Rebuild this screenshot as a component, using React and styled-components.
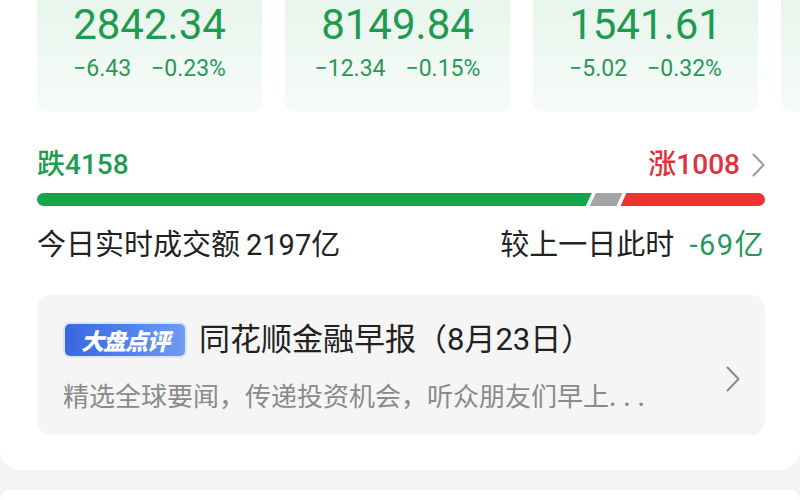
import React from "react";
import styled, { createGlobalStyle } from "styled-components";

const Global = createGlobalStyle`
  html, body { margin: 0; padding: 0; background: #f3f3f3; }
  body {
    font-family: Roboto, "Noto Sans CJK SC", sans-serif;
    width: 800px; height: 500px; overflow: hidden;
  }
`;

const Page = styled.div`
  display: flex;
  flex-direction: column;
  gap: 20px;
  width: 800px;
  height: 500px;
  overflow: hidden;
`;

const Panel = styled.section`
  background: #fff;
  border-radius: 0 0 20px 20px;
  height: 470px;
  box-sizing: border-box;
  padding: 0 35px 0 37px;
  overflow: hidden;
  display: flex;
  flex-direction: column;
  flex-shrink: 0;
`;

const NextPanel = styled.section`
  background: #fff;
  border-radius: 20px 20px 0 0;
  flex: 1;
`;

const IndexRow = styled.div`
  display: flex;
  gap: 23px;
  height: 112px;
`;

const IndexCard = styled.div`
  flex: 0 0 225px;
  border-radius: 0 0 10px 10px;
  background: linear-gradient(180deg, #e7f5ec 0%, #f1f9f4 60%, #f6fbf8 100%);
  display: flex;
  flex-direction: column;
  align-items: center;
`;

const BigNum = styled.div`
  font-size: 42px;
  line-height: 49px;
  font-weight: 400;
  color: #1f9a51;
`;

const SubLine = styled.div`
  margin-top: 6px;
  display: flex;
  gap: 20px;
  font-size: 23px;
  line-height: 28px;
  color: #2b9758;
`;

const CountRow = styled.div`
  margin-top: 35px;
  display: flex;
  justify-content: space-between;
  align-items: center;
  height: 36px;
  font-size: 28px;
  line-height: 36px;
  font-weight: 500;
`;

const Count = styled.span`
  color: ${(p) => p.$color};
`;

const RightGroup = styled.div`
  display: flex;
  align-items: center;
  gap: 12px;
`;

const BarWrap = styled.div`
  margin-top: 10px;
  height: 13px;
  display: flex;
`;

const VolumeRow = styled.div`
  margin-top: 21px;
  display: flex;
  justify-content: space-between;
  height: 36px;
  font-size: 29px;
  line-height: 36px;
  color: #222;
`;

const Figure = styled.span`
  margin-left: ${(p) => p.$gap || 6}px;
  color: ${(p) => p.$color || "inherit"};
  letter-spacing: ${(p) => (p.$wide ? "1.5px" : "0")};
`;

const NewsCard = styled.div`
  margin-top: 32px;
  height: 140px;
  box-sizing: border-box;
  border-radius: 14px;
  background: #f5f5f5;
  padding: 28px 25px 0 26px;
  display: flex;
  align-items: center;
  gap: 12px;
`;

const NewsBody = styled.div`
  flex: 1;
  align-self: flex-start;
  display: flex;
  flex-direction: column;
  gap: 21px;
`;

const TitleRow = styled.div`
  display: flex;
  align-items: center;
  gap: 12px;
  height: 34px;
`;

const Badge = styled.span`
  box-sizing: border-box;
  height: 36px;
  width: 124px;
  border-radius: 7px;
  border: 2px solid #dbe6fb;
  background: linear-gradient(90deg, #3868de 0%, #5585ee 60%, #719cf3 100%);
  color: #fff;
  font-family: "Noto Sans CJK SC", sans-serif;
  font-size: 23px;
  font-weight: 900;
  font-style: italic;
  line-height: 32px;
  text-align: center;
  letter-spacing: -1px;
`;

const Title = styled.span`
  font-family: Roboto, "Noto Sans CJK SC", sans-serif;
  font-size: 31px;
  line-height: 34px;
  color: #222;
`;

const Summary = styled.div`
  font-family: "Noto Sans CJK SC", sans-serif;
  font-size: 26px;
  line-height: 34px;
  color: #8a8a8a;
  white-space: nowrap;
`;

const Dots = styled.span`
  letter-spacing: 7px;
`;

const ChevronIcon = ({ w = 14, h = 26, color = "#8a8a8a" }) => (
  <svg width={w} height={h} viewBox={`0 0 ${w} ${h}`} fill="none">
    <polyline
      points={`1.5,1.5 ${w - 1.5},${h / 2} 1.5,${h - 1.5}`}
      stroke={color}
      strokeWidth="2"
      strokeLinecap="round"
      strokeLinejoin="round"
    />
  </svg>
);

const RatioBar = ({ down, flat, up }) => {
  const W = 728;
  const H = 13;
  const gap = 4;
  const slant = 6;
  const total = down + flat + up;
  const usable = W - gap * 2;
  const g = (usable * down) / total;
  const f = (usable * flat) / total;
  const x1 = g;
  const x2 = g + gap + f;
  const r = H / 2;
  return (
    <svg width={W} height={H} viewBox={`0 0 ${W} ${H}`}>
      <path
        d={`M${r},0 L${x1},0 L${x1 - slant},${H} L${r},${H} A${r},${r} 0 0 1 ${r},0 Z`}
        fill="#16a34a"
      />
      <path
        d={`M${x1 + gap},0 L${x2 - gap},0 L${x2 - gap - slant},${H} L${x1 + gap - slant},${H} Z`}
        fill="#a3a3a3"
      />
      <path
        d={`M${x2},0 L${W - r},0 A${r},${r} 0 0 1 ${W - r},${H} L${x2 - slant},${H} Z`}
        fill="#f03233"
      />
    </svg>
  );
};

const indices = [
  { value: "2842.34", change: "−6.43", pct: "−0.23%" },
  { value: "8149.84", change: "−12.34", pct: "−0.15%" },
  { value: "1541.61", change: "−5.02", pct: "−0.32%" },
  { value: "", change: "", pct: "" },
];

export default function App() {
  return (
    <>
      <Global />
      <Page>
        <Panel>
          <IndexRow>
            {indices.map((it, i) => (
              <IndexCard key={i}>
                <BigNum>{it.value}</BigNum>
                <SubLine>
                  <span>{it.change}</span>
                  <span>{it.pct}</span>
                </SubLine>
              </IndexCard>
            ))}
          </IndexRow>

          <CountRow>
            <Count $color="#1f9c50">跌4158</Count>
            <RightGroup>
              <Count $color="#e0323c">涨1008</Count>
              <ChevronIcon w={13} h={24} color="#9a9a9a" />
            </RightGroup>
          </CountRow>

          <BarWrap>
            <RatioBar down={4158} flat={230} up={1008} />
          </BarWrap>

          <VolumeRow>
            <span>
              今日实时成交额<Figure>2197亿</Figure>
            </span>
            <span>
              较上一日此时<Figure $gap={15} $color="#23995a" $wide>-69亿</Figure>
            </span>
          </VolumeRow>

          <NewsCard>
            <NewsBody>
              <TitleRow>
                <Badge>大盘点评</Badge>
                <Title>同花顺金融早报（8月23日）</Title>
              </TitleRow>
              <Summary>
                精选全球要闻，传递投资机会，听众朋友们早上<Dots>...</Dots>
              </Summary>
            </NewsBody>
            <ChevronIcon />
          </NewsCard>
        </Panel>
        <NextPanel />
      </Page>
    </>
  );
}
